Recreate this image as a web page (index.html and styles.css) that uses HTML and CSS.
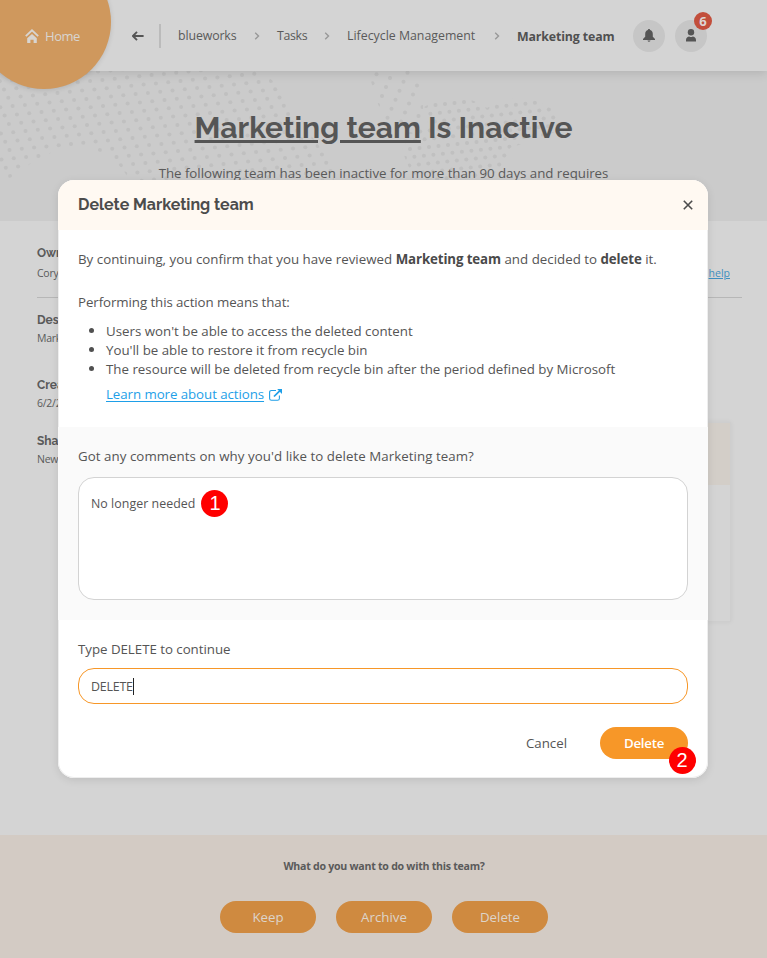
FILE: index.html
```
<!DOCTYPE html>
<html lang="en">
<head>
<meta charset="utf-8">
<title>Marketing team</title>
<link rel="stylesheet" href="styles.css">
</head>
<body>
<div class="page">
  <header class="topbar">
    <a class="home">
      <svg width="14" height="14" viewBox="0 0 14 14"><path d="M.8 7.100 7 1.300l6.200 5.800" fill="none" stroke="currentColor" stroke-width="1.900"/><path d="M2.200 9.200 7 4.900l4.800 4.300V14H8.600v-3.200H5.400V14H2.200z" fill="currentColor"/></svg>
      <span>Home</span>
    </a>
    <svg class="back" width="12" height="10" viewBox="0 0 12 10"><path d="M5 .9.9 5 5 9.100M1 5h10.600" fill="none" stroke="#555" stroke-width="1.900"/></svg>
    <span class="bar"></span>
    <nav class="crumbs">
      <span class="c1">blueworks</span>
      <svg class="chev" width="6" height="8" viewBox="0 0 6 8"><path d="M1.200.8 4.500 4 1.200 7.200"/></svg>
      <span class="c2">Tasks</span>
      <svg class="chev" width="6" height="8" viewBox="0 0 6 8"><path d="M1.200.8 4.500 4 1.200 7.200"/></svg>
      <span class="c3">Lifecycle Management</span>
      <svg class="chev" width="6" height="8" viewBox="0 0 6 8"><path d="M1.200.8 4.500 4 1.200 7.200"/></svg>
      <b class="c4">Marketing team</b>
    </nav>
    <span class="round"><svg width="12" height="13" viewBox="0 0 12 13"><path d="M6 0c.7 0 1.100.5 1.100 1.100C8.900 1.600 9.800 3 9.800 5v2.700L12 10v1H0v-1l2.200-2.300V5c0-2 .9-3.400 2.700-3.900C4.900.5 5.300 0 6 0zM4.500 11.600h3C7.300 12.400 6.800 12.800 6 12.800s-1.300-.4-1.500-1.200z" fill="#555"/></svg></span>
    <span class="round user"><svg width="10" height="13" viewBox="0 0 10 13"><circle cx="5" cy="3.300" r="3.200" fill="#555"/><path d="M0 12.500V11c0-2.200 1.700-3.600 3.300-3.600.5.400 1 .5 1.700.5s1.200-.1 1.700-.5C8.300 7.400 10 8.800 10 11v1.500z" fill="#555"/></svg><b class="count">6</b></span>
  </header>

  <section class="banner">
    <svg class="dots" width="767" height="150" viewBox="0 71 767 150">
      <defs>
        <clipPath id="west"><path d="M0 71H258C277 80 291 99 297 116 307 133 323 147 334 170V181H130C118 158 100 148 78 147 55 147 34 160 6 181H0z"/></clipPath>
        <clipPath id="mid"><path d="M369 71H415C419 84 424 96 423 108L419 134H398C385 124 374 100 369 71z"/></clipPath>
        <clipPath id="east"><path d="M424 107C440 98 465 92 487 108 505 96 534 93 558 113V131L510 148C508 160 500 172 483 181H424C411 176 403 160 402 141L428 124z"/></clipPath>
      </defs>
      <g id="dots-west" clip-path="url(#west)"></g>
      <g id="dots-mid" clip-path="url(#mid)"></g>
      <g id="dots-east" clip-path="url(#east)"></g>
    </svg>
    <h1><u>Marketing team</u> Is Inactive</h1>
    <p>The following team has been inactive for more than 90 days and requires</p>
  </section>

  <main class="details">
    <dl class="owners"><dt>Owners</dt><dd><span>Cory</span><a>help</a></dd></dl>
    <div class="lower">
      <div class="facts">
        <dl><dt>Description</dt><dd>Marketing</dd></dl>
        <dl><dt>Created</dt><dd>6/2/2022</dd></dl>
        <dl><dt>Sharing</dt><dd>New</dd></dl>
      </div>
      <div class="card"><div class="card-head"></div></div>
    </div>
  </main>

  <footer class="actions">
    <p>What do you want to do with this team?</p>
    <div class="action-row"><button>Keep</button><button>Archive</button><button>Delete</button></div>
  </footer>
</div>

<div class="modal" role="dialog">
  <header class="modal-head">
    <h2>Delete Marketing team</h2>
    <svg width="10" height="10" viewBox="0 0 10 10"><path d="m.8.8 8.400 8.400M9.200.8.8 9.200" stroke="#4c4c4c" stroke-width="1.600"/></svg>
  </header>
  <div class="modal-body">
    <p class="confirm">By continuing, you confirm that you have reviewed <b>Marketing team</b> and decided to <b>delete</b> it.</p>
    <p class="means">Performing this action means that:</p>
    <ul>
      <li>Users won't be able to access the deleted content</li>
      <li>You'll be able to restore it from recycle bin</li>
      <li>The resource will be deleted from recycle bin after the period defined by Microsoft</li>
    </ul>
    <a class="learn"><u>Learn more about actions</u><svg width="13" height="12" viewBox="0 0 13 12"><path d="M7 1.500H2.500Q.6 1.500.6 3.400v6Q.6 11.300 2.500 11.300h6q1.900 0 1.900-1.900V6.500" fill="none" stroke="currentColor" stroke-width="1.100"/><path d="M5 7.500 11 1.600" stroke="currentColor" stroke-width="1.700"/><path d="M8.200.1H13v4.800z" fill="currentColor"/></svg></a>
  </div>
  <div class="comment">
    <label>Got any comments on why you'd like to delete Marketing team?</label>
    <div class="textarea"><span>No longer needed</span><i class="step">1</i></div>
  </div>
  <div class="final">
    <label>Type DELETE to continue</label>
    <div class="input"><span>DELETE</span><i class="caret"></i></div>
    <div class="buttons"><span class="cancel">Cancel</span><span class="delete">Delete<i class="step two">2</i></span></div>
  </div>
</div>
<script src="dots.js"></script>
</body>
</html>
```
FILE: styles.css
```
* { box-sizing: border-box; }
body { margin: 0; width: 767px; height: 958px; overflow: hidden; position: relative; background: #d4d4d4; color: #555; font: 13.3px/19px "Segoe UI", "Open Sans", sans-serif; }
p, h1, h2, dl, dd, ul { margin: 0; padding: 0; }
.page { height: 958px; display: flex; flex-direction: column; color: #5a5a5a; }
.topbar { height: 71px; flex: none; position: relative; z-index: 1; display: flex; align-items: center; background: #d4d4d4; box-shadow: 0 2px 10px rgba(0,0,0,.13); font-size: 12.35px; }
.home { position: absolute; left: -23px; top: -45px; width: 134px; height: 134px; border-radius: 50%; background: #cf985d; color: #d8d5d1; box-shadow: 0 1px 5px rgba(0,0,0,.12); display: flex; gap: 6px; padding: 72px 0 0 48px; font-size: 13px; line-height: 19px; }
.home span { letter-spacing: -.45px; }
.home svg { margin-top: 2px; }
.back { margin-left: 132px; margin-top: 1px; }
.bar { width: 2px; height: 24px; background: #bbb; margin-left: 15px; }
.crumbs { display: flex; align-items: center; margin-left: 17px; width: 440px; height: 19px; }
.crumbs span, .crumbs b { white-space: nowrap; flex: none; }
.crumbs b { margin-top: 1px; color: #505050; }
.c1 { width: 76px; letter-spacing: -.12px; }
.c2 { width: 47px; letter-spacing: -.35px; }
.c3 { width: 147px; }
.c4 { letter-spacing: -.13px; }
.chev { fill: none; stroke: #989898; stroke-width: 1.4; flex: none; margin-right: 17px; }
.round { width: 32px; height: 32px; border-radius: 50%; background: #c6c6c6; margin-left: 15px; display: flex; align-items: center; justify-content: center; position: relative; }
.user { margin-left: 10px; }
.count { position: absolute; left: 19px; top: -8px; width: 18px; height: 18px; border-radius: 50%; background: #c24e3b; color: #ddd6d3; font-size: 13px; line-height: 18px; text-align: center; }
.banner { height: 150px; flex: none; background: #cbcbcb; position: relative; text-align: center; }
.dots { position: absolute; left: 0; top: 0; fill: #c0c0c0; }
.banner h1 { position: relative; padding-top: 37px; font: 700 30px/40px Raleway, Lato, sans-serif; color: #555; }
.banner h1 u { text-decoration-thickness: 3px; text-underline-offset: 2px; }
.banner p { position: relative; margin-top: 16px; letter-spacing: -.03px; }
.details { height: 614px; flex: none; padding: 23px 25px 0 37px; font-size: 10.5px; line-height: 18px; }
.details dt { font: 700 12px/18px Raleway, Lato, sans-serif; }
.details dd { letter-spacing: -.25px; }
.owners { height: 54px; border-bottom: 1px solid #b7b7b7; }
.owners dd { display: flex; justify-content: space-between; padding: 2px 12px 0 0; }
.owners a { color: #3f8fc0; text-decoration: underline; letter-spacing: 0; }
.lower { display: flex; justify-content: space-between; padding: 13px 11px 0 0; }
.facts dl { height: 56px; }
.facts dl:first-child { height: 65px; }
.card { width: 300px; height: 200px; margin-top: 111px; border: 1px solid #cecece; box-shadow: 0 0 5px rgba(0,0,0,.06); }
.card-head { height: 62px; background: #d3cec8; }
.actions { flex: 1; background: #d3cbc4; text-align: center; padding-top: 22px; }
.actions p { font-size: 10.6px; font-weight: 700; letter-spacing: -.26px; line-height: 18px; padding-left: 1px; }
.action-row { display: flex; justify-content: center; gap: 20px; margin: 26px 0 0 1px; }
.action-row button { width: 96px; height: 32px; border: 0; border-radius: 16px; background: #cf8a40; color: #ddd4ca; font: 13.3px/32px "Segoe UI", "Open Sans", sans-serif; padding: 0; }
.modal { position: absolute; left: 58px; top: 180px; width: 650px; height: 598px; border-radius: 16px; background: #fff; box-shadow: 0 2px 8px rgba(0,0,0,.1), inset 0 0 0 1px #eee; }
.modal-head { height: 50px; border-radius: 16px 16px 0 0; background: #fff9f2; display: flex; justify-content: space-between; padding: 0 15px 0 20px; }
.modal-head h2 { font: 700 16px/20px Raleway, Lato, sans-serif; padding-top: 15px; color: #4c4c4c; }
.modal-head svg { margin-top: 19.5px; }
.modal-body { height: 197px; padding: 20px 20px 0; }
.confirm { white-space: nowrap; letter-spacing: .02px; }
.confirm b { letter-spacing: -.12px; color: #4a4a4a; }
.means { margin-top: 24px; letter-spacing: -.08px; }
.modal-body ul { margin-top: 10px; padding-left: 28px; list-style: none; }
.modal-body li { position: relative; white-space: nowrap; }
.modal-body li::before { content: ""; position: absolute; left: -17.5px; top: 6px; width: 5px; height: 5px; border-radius: 50%; background: #505050; }
.learn { display: flex; align-items: center; gap: 5px; margin: 6px 0 0 28px; color: #1e9fe8; letter-spacing: -.07px; }
.learn u { text-underline-offset: 2px; }
.comment { height: 193px; background: #fafafa; padding: 20px 20px 0; }
.comment label { letter-spacing: .05px; }
.textarea { height: 123px; margin-top: 11px; border: 1px solid #d3d3d3; border-radius: 16px; background: #fff; padding: 12px; display: flex; align-items: flex-start; gap: 6px; font-size: 12.4px; letter-spacing: .04px; line-height: 27px; }
.step { width: 27px; height: 27px; border-radius: 50%; background: #f00; color: #fff; font: 20px/27px "Liberation Sans", sans-serif; text-align: center; letter-spacing: 0; }
.final { padding: 20px 20px 0; }
.final label { letter-spacing: -.03px; }
.input { height: 36px; margin-top: 9px; border: 1px solid #f79728; border-radius: 16px; display: flex; align-items: center; padding-left: 12px; font-size: 12.4px; letter-spacing: -.2px; }
.caret { width: 1px; height: 17px; background: #222; }
.buttons { display: flex; justify-content: flex-end; gap: 33px; margin-top: 23px; line-height: 32px; }
.delete { position: relative; width: 88px; height: 32px; border-radius: 16px; background: #f79728; color: #fff; font-weight: 600; letter-spacing: -.25px; text-align: center; }
.two { position: absolute; left: 68.5px; top: 20px; }
```
FILE: dots.js
```
// Fills a clipped group with a slanted grid of dots.
function fill(id, ox, oy, ax, ay, bx, by) {
  const group = document.getElementById(id);
  for (let i = -45; i < 60; i++) {
    for (let j = -30; j < 40; j++) {
      const x = ox + i * ax + j * bx;
      const y = oy + i * ay + j * by;
      if (x < -3 || x > 600 || y < 60 || y > 190) continue;
      const c = document.createElementNS('http://www.w3.org/2000/svg', 'circle');
      c.setAttribute('cx', x);
      c.setAttribute('cy', y);
      c.setAttribute('r', 2);
      group.appendChild(c);
    }
  }
}
fill('dots-west', 4, 89.5, 12.3, -1.2, 4.3, 8.3);
fill('dots-mid', 390, 78, 13.5, 3.7, -4, 9);
fill('dots-east', 445, 104, 9.5, -1, 4.4, 7.8);
```
